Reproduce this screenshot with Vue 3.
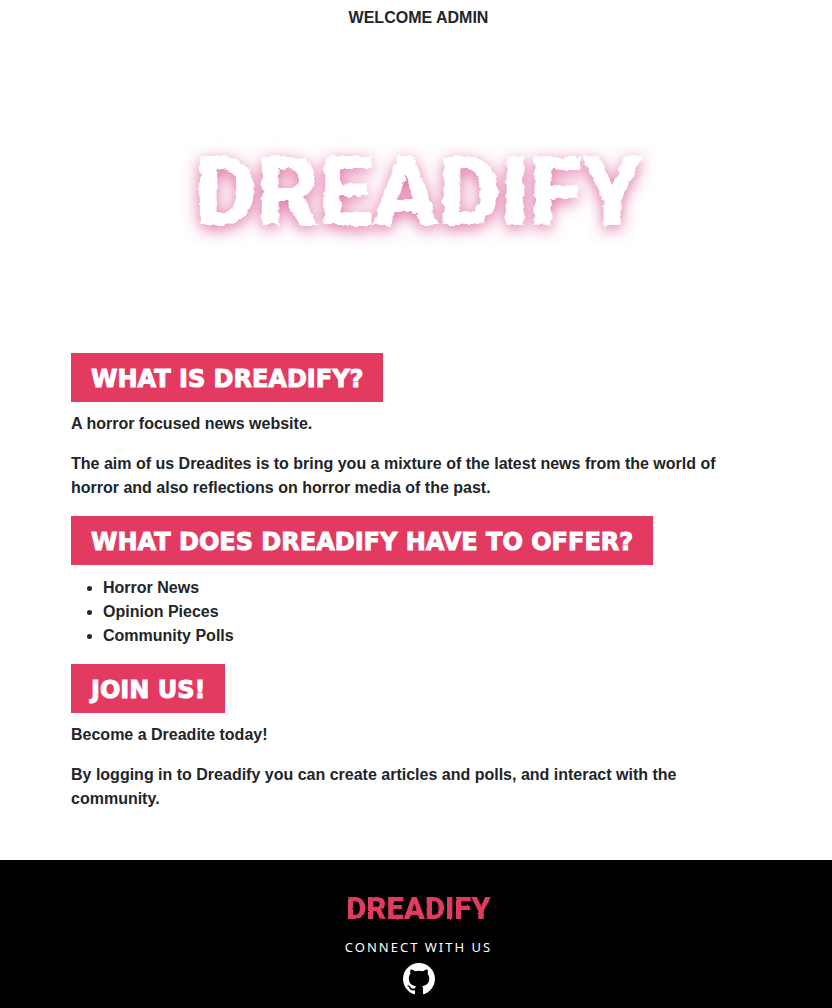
<script setup>
const offers = ['Horror News', 'Opinion Pieces', 'Community Polls']
</script>

<template>
  <div class="page">
    <header class="hero">
      <p class="welcome">WELCOME ADMIN</p>
      <h1 class="brand">DREADIFY</h1>
    </header>

    <main class="content">
      <h2>WHAT IS DREADIFY?</h2>
      <p>A horror focused news website.</p>
      <p>
        The aim of us Dreadites is to bring you a mixture of the latest news from the world of
        horror and also reflections on horror media of the past.
      </p>

      <h2>WHAT DOES DREADIFY HAVE TO OFFER?</h2>
      <ul>
        <li v-for="offer in offers" :key="offer">{{ offer }}</li>
      </ul>

      <h2>JOIN US!</h2>
      <p>Become a Dreadite today!</p>
      <p>
        By logging in to Dreadify you can create articles and polls, and interact with the
        community.
      </p>
    </main>

    <footer class="footer">
      <div class="footer-brand">DREADIFY</div>
      <p class="connect">CONNECT WITH US</p>
      <a class="github" href="#" aria-label="GitHub">
        <svg viewBox="0 0 16 16" width="32" height="32" aria-hidden="true">
          <path
            fill="currentColor"
            d="M8 0C3.58 0 0 3.58 0 8c0 3.54 2.29 6.53 5.47 7.59.4.07.55-.17.55-.38 0-.19-.01-.82-.01-1.49-2.01.37-2.53-.49-2.69-.94-.09-.23-.48-.94-.82-1.13-.28-.15-.68-.52-.01-.53.63-.01 1.08.58 1.23.82.72 1.21 1.87.87 2.33.66.07-.52.28-.87.51-1.07-1.78-.2-3.64-.89-3.64-3.95 0-.87.31-1.59.82-2.15-.08-.2-.36-1.02.08-2.12 0 0 .67-.21 2.2.82.64-.18 1.32-.27 2-.27s1.36.09 2 .27c1.53-1.04 2.2-.82 2.2-.82.44 1.1.16 1.92.08 2.12.51.56.82 1.27.82 2.15 0 3.07-1.87 3.75-3.65 3.95.29.25.54.73.54 1.48 0 1.07-.01 1.93-.01 2.2 0 .21.15.46.55.38A8.01 8.01 0 0 0 16 8c0-4.42-3.58-8-8-8z"
          />
        </svg>
      </a>
    </footer>

    <svg class="filters" width="0" height="0" aria-hidden="true">
      <filter id="rough-large" x="-10%" y="-20%" width="120%" height="140%">
        <feTurbulence type="fractalNoise" baseFrequency="0.12" numOctaves="3" seed="4" result="n" />
        <feDisplacementMap in="SourceGraphic" in2="n" scale="6" xChannelSelector="R" yChannelSelector="G" result="torn" />
        <feDropShadow in="torn" dx="0" dy="4" stdDeviation="8" flood-color="#dc5a96" flood-opacity="0.9" />
      </filter>
      <filter id="rough-small" x="-10%" y="-20%" width="120%" height="140%">
        <feTurbulence type="fractalNoise" baseFrequency="0.3" numOctaves="2" seed="4" result="n" />
        <feDisplacementMap in="SourceGraphic" in2="n" scale="2" xChannelSelector="R" yChannelSelector="G" />
      </filter>
    </svg>
  </div>
</template>

<style>
body {
  margin: 0;
  background: #fff;
}
</style>

<style scoped>
.page {
  color: #212529;
  font: 700 16px/24px Arial, "Liberation Sans", sans-serif;
}

.hero {
  display: flex;
  flex-direction: column;
  align-items: center;
  padding: 6px 0 0 5px;
}

.welcome {
  margin: 0;
}

.brand {
  display: flex;
  align-items: center;
  justify-content: center;
  height: 323px;
  margin: 0;
  color: #fff;
  font: 900 96px/1 Roboto, sans-serif;
  filter: url(#rough-large);
}

.content {
  box-sizing: border-box;
  max-width: 720px;
  margin: 0 auto;
  padding: 0 15px 33px;
}

h2 {
  width: fit-content;
  margin: 0 0 10px;
  padding: 12px 20px 8px;
  background: #e23a61;
  color: #fff;
  font: 700 24px/29px "DejaVu Sans", sans-serif;
  -webkit-text-stroke: 1px #fff;
}

.content p {
  margin: 0 0 16px;
}

ul {
  margin: 0 0 16px;
  padding: 1px 0 0 32px;
}

.footer {
  display: flex;
  flex-direction: column;
  align-items: center;
  padding: 24px 0 13px 5px;
  background: #000;
  color: #fff;
}

.footer-brand {
  color: #e23a61;
  font: 900 31px/50px Roboto, sans-serif;
  filter: url(#rough-small);
}

.connect {
  margin: 0;
  font: 400 13px/26px "Noto Sans", sans-serif;
  letter-spacing: 2px;
}

.github {
  display: flex;
  margin-top: 3px;
  color: #fff;
}

.filters {
  position: absolute;
}
</style>
